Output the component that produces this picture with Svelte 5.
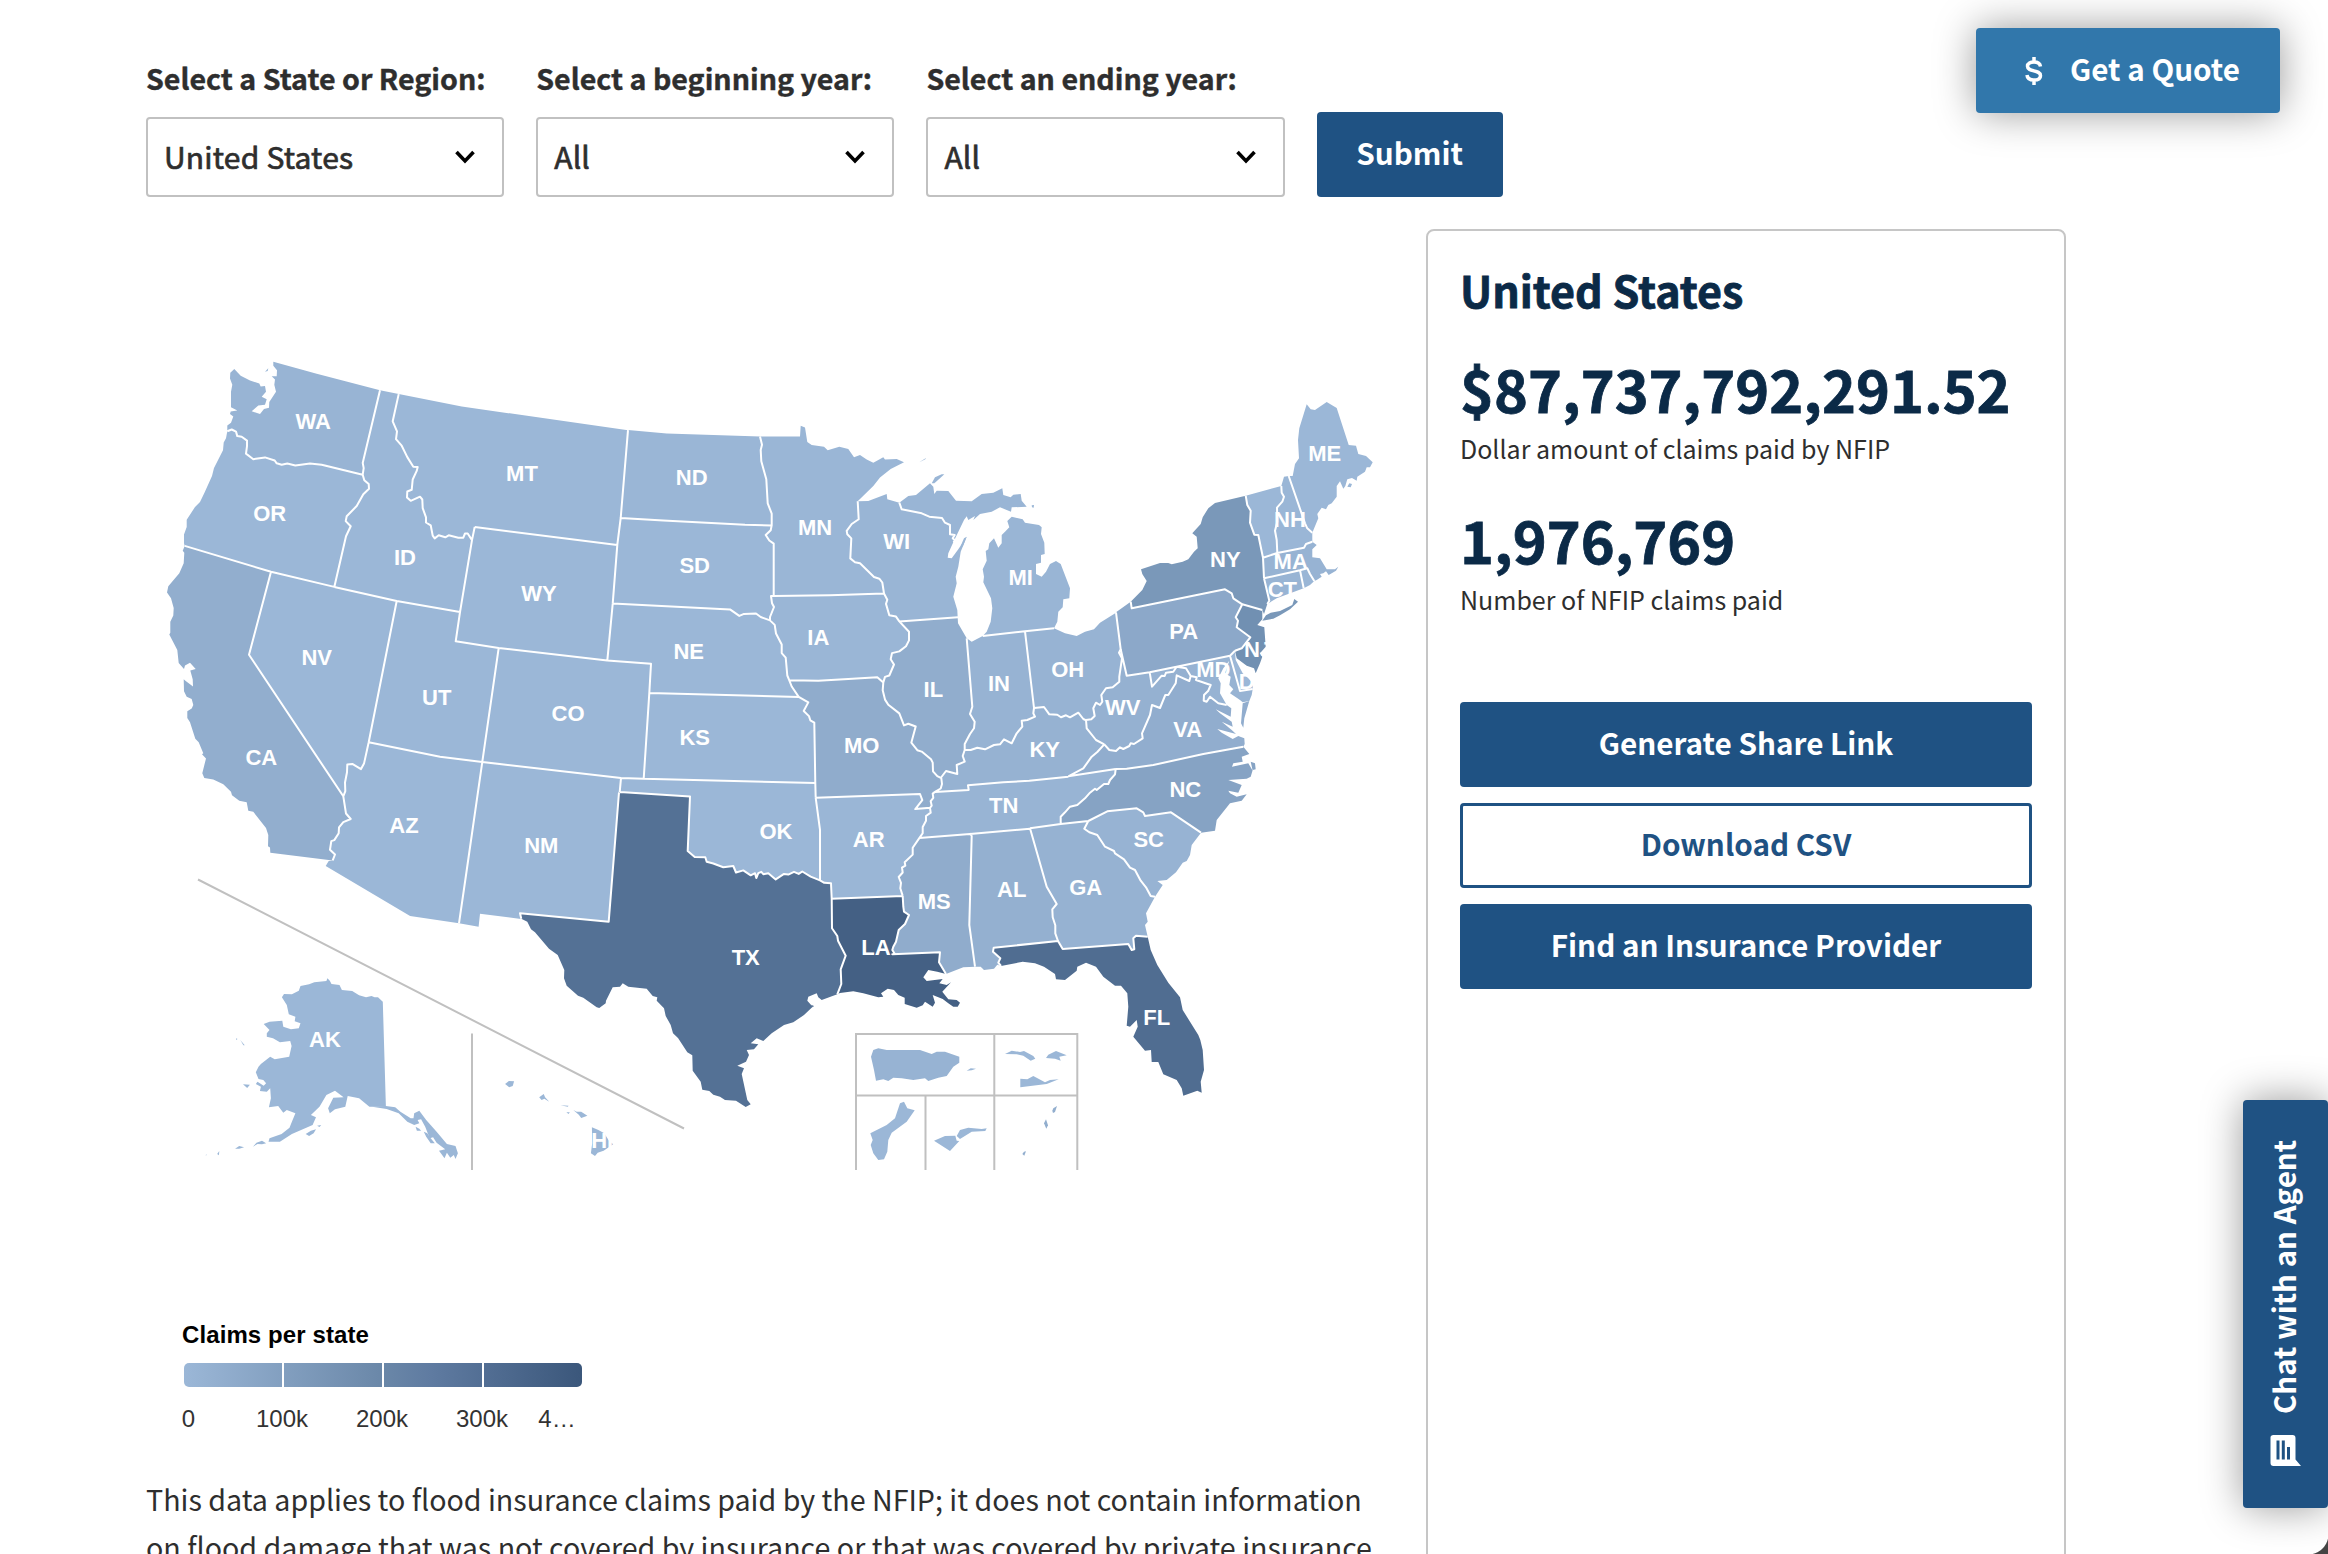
<script>
  // Digitising frames: origin and scale of each sheet the arcs were traced on.
  const frames = {
    A: [150, 340, 3, 2.9037],
    B: [600, 400, 3, 2.9037],
    C: [1060, 380, 3, 3],
    D: [500, 760, 3, 3],
    E: [180, 860, 2.9037, 3],
    F: [820, 780, 3, 3],
    G: [840, 420, 3, 3],
  };

  // Borders shared by two states; each is stored once.
  const borders = {
    waid: 'A 690,146 638,357 641,372 638,391',
    orwa: 'A 638,391 515,362 480,359 436,364 412,359 395,362 380,358 374,350 345,341 310,346 288,330 291,308 291,292 275,281 262,279 258,266 245,260 232,265',
    orid: 'A 638,391 643,407 656,418 657,432 640,448 620,482 590,512 587,526 602,541 588,570 553,717',
    orca: 'A 104,598 363,673',
    ornv: 'A 363,673 553,717',
    idnv: 'A 553,717 740,758',
    idut: 'A 740,758 930,790',
    idwy: 'A 930,790 966,581',
    mtwyw: 'A 966,581 974,543',
    idmt: 'A 746,157 728,236 741,265 738,288 755,307 772,340 790,368 803,369 800,380 788,405 785,435 772,440 771,457 782,467 810,455 817,463 818,488 828,515 828,530 842,538 848,568 854,576 866,567 886,573 896,567 925,574 940,574 945,562 953,562 966,581',
    mtnd: 'A 1434,262 1412,517',
    mtsd: 'A 1412,517 1402,595',
    mtwy: 'A 974,543 1402,595',
    wysd: 'A 1402,595 1388,766',
    wyne: 'A 1388,766 1372,931',
    wyco: 'A 1372,931 1046,894',
    wyut: 'A 1046,894 917,875 930,790',
    nvca: 'A 363,673 297,914 580,1325',
    caaz: 'A 580,1325 588,1375 602,1391 580,1400 567,1415 566,1432 553,1452 544,1455 540,1480 555,1494 548,1511',
    aznv: 'A 656,1168 642,1230 633,1246 607,1231 592,1233 591,1255 585,1285 586,1310 580,1325',
    nvut: 'A 740,758 656,1168',
    utaz: 'A 656,1168 870,1210 997,1225',
    utco: 'A 1046,894 997,1225',
    conm: 'A 997,1225 1413,1272',
    cook: 'A 1413,1272 B 131,1100',
    aznm: 'A 997,1225 946,1568 E 810,190',
    nmok: 'A 1413,1272 1409,1313',
    nmtx: 'D 64,476 60,460 326,485 357,97',
    ndsd: 'B 62,343 190,350 435,362 515,364',
    ndmn: 'B 480,106 486,130 482,145 484,178 499,230 503,300 515,330 515,364',
    sdmn: 'B 515,364 512,378 497,392 508,408 521,417 521,569',
    sdia: 'B 521,569 513,569 516,590 522,601 510,630 510,640',
    sdne: 'B 38,591 390,608 418,627 432,621 468,620 482,630 510,640',
    mnia: 'B 521,569 690,567 852,562',
    mnwi: 'B 773,294 776,346 755,360 740,380 742,390 754,402 751,460 765,471 780,474 822,514 838,519 847,530 852,562',
    wiia: 'B 852,562 862,580 858,592 868,625 888,629 898,643',
    wiil: 'B 898,643 1074,631',
    iail: 'B 898,643 927,673 927,698 918,715 898,730 876,735 872,753 882,768 868,800 855,804 850,820',
    iamo: 'B 850,820 832,805 745,810 655,815 568,814',
    iane: 'B 510,640 524,653 528,678 545,710 545,735 557,748 562,800 568,814',
    nemo: 'B 568,814 575,832 596,862',
    neks: 'B 148,851 596,862',
    neco: 'B 22,756 153,766 148,851',
    coks: 'B 148,851 131,1100',
    ksmo: 'B 596,862 625,878 611,903 627,918 631,930 643,937 646,1112',
    ksok: 'B 131,1100 646,1112',
    mook: 'B 646,1112 647,1155',
    moar: 'B 647,1155 960,1144 967,1162 946,1188 990,1184',
    ilmo: 'B 850,820 848,843 855,870 865,885 898,910 912,945 925,940 947,948 934,995 952,1017 965,1021 993,1043 998,1053 999,1078 1012,1092 1024,1098',
    moky: 'B 1024,1098 1026,1115 1022,1128 1005,1138',
    motn: 'B 1005,1138 998,1143 1000,1155 992,1165 995,1178 990,1184',
    artn: 'B 990,1184 992,1198 978,1208 978,1222 968,1240 968,1258 958,1272',
    tnms: 'B 958,1272 1110,1260',
    tnal: 'B 1110,1260 1290,1245',
    okar: 'B 647,1155 660,1248 660,1395',
    oktx: 'B 60,1138 270,1151 263,1310 284,1327 316,1328 320,1341 340,1346 370,1357 400,1353 408,1372 430,1366 452,1380 465,1374 469,1388 475,1374 484,1370 490,1377 505,1374 527,1392 552,1376 565,1378 582,1370 596,1376 607,1369 632,1384 660,1395',
    txar: 'B 660,1395 673,1402 693,1403 695,1448',
    arla: 'B 695,1448 908,1440',
    arms: 'B 958,1272 938,1300 938,1320 914,1342 916,1352 906,1358 908,1372 896,1385 903,1402 901,1418 908,1440',
    lams: 'F 248,348 250,380 252,395 267,405 255,432 236,450 228,485 220,500 217,510 225,523 217,523 360,517 357,547 378,582',
    txla: 'D 995,415 996,505 1012,528 1014,542 1037,587 1022,628 1024,672 1012,703',
    msal: 'F 465,560 448,435 455,168 450,160',
    alfl: 'F 543,558 535,548 541,535 519,515 521,503 714,483',
    alga: 'F 630,145 680,320 710,372 697,388 698,412 706,436 706,460 714,483',
    gafl: 'F 714,483 728,507 925,492 935,510 943,508 940,475 948,467 983,470',
    gasc: 'F 1005,350 992,348 978,322 962,302 945,270 930,263 912,238 885,220 882,213 855,200 832,165 808,157 793,146 805,123',
    tnga: 'F 630,145 722,132',
    ncga: 'F 722,132 805,123',
    scnc: 'F 805,123 862,94 950,85 970,97 975,108 1053,97 1143,158',
    ncva: 'C 550,1100 430,1122 280,1155 200,1166 167,1167',
    tnva: 'C 167,1167 25,1189',
    kytn: 'G 685,1070 568,1082 490,1087 384,1096 386,1110 285,1116',
    nctn: 'C 167,1167 165,1183 150,1200 145,1212 132,1212 110,1230 105,1226 90,1238 75,1255 52,1275 30,1280 15,1297 F 722,110 722,132',
    vaky: 'C 25,1189 70,1165 95,1130 112,1116 133,1093',
    wvky: 'C 133,1093 108,1080 80,1045 78,1020',
    wvva: 'C 133,1093 148,1110 168,1113 180,1102 190,1107 208,1098 212,1090 222,1092 248,1075 246,1060 270,1005 276,975 300,984 316,945 325,945 347,910 350,886 388,903 392,888',
    wvmd: 'C 392,888 378,865 350,860 340,875 318,878 314,888 305,887 276,920 269,877',
    mdva: 'C 392,888 410,892 408,900 452,915 445,932 432,945 431,962 440,965 450,950 475,970 500,975',
    wvpa: 'C 269,877 200,887 182,808',
    ohwv: 'C 182,808 177,818 186,835 178,890 178,905 158,922 138,925 124,945 127,965 120,975 108,968 100,985 104,1008 94,1018 78,1020',
    ohpa: 'C 168,697 182,808',
    pany: 'C 212,665 215,685 495,628 515,640 520,655 547,673',
    panj: 'C 547,673 527,712 534,722 530,742 571,772 545,805 525,812',
    pamd: 'C 269,877 510,827',
    pade: 'C 510,827 525,812',
    mdde: 'C 510,827 540,933 578,927',
    njny: 'C 547,673 607,690',
    nyct: 'C 622,672 628,662 612,595',
    nyma: 'C 612,595 609,533',
    nyvt: 'C 609,533 595,465 583,464 570,428 572,392 562,375 557,347',
    vtnh: 'C 664,318 665,338 672,350 667,365 651,383 652,425 645,452 650,480 652,519',
    vtma: 'C 609,533 652,519',
    nhma: 'C 652,519 732,503 738,492 757,485',
    nhme: 'C 686,288 735,430 742,445 757,458',
    ctma: 'C 612,595 720,571',
    mari: 'C 720,571 742,565 750,582 763,603',
    ctri: 'C 720,571 731,625',
    ohky: 'G 740,902 730,897 715,878 690,892 678,886 663,892 652,884 628,883 612,861 582,864',
    kyin: 'G 582,864 580,880 585,890 562,900 545,902 547,920 530,940 515,970 492,958 480,973 462,975 435,988 412,983 392,990 374,990',
    kyil: 'G 374,990 368,1008 374,1025 350,1035 352,1062 318,1053 302,1074',
    ilin: 'G 380,655 397,860 390,882 404,905 402,925 390,942 374,972 374,990',
    ohin: 'G 555,634 582,864',
    inmi: 'G 555,634 428,648',
    ohmi: 'G 555,634 642,625',
    wimi: 'G 178,248 185,268 245,280 268,290 306,294 315,308 330,315 330,343 344,345 338,355 346,362 340,367',
  };

  // Coasts and outer frontiers, drawn without a line.
  const coasts = {
    wac: 'A 232,265 232,248 243,240 250,222 240,215 242,208 262,205 243,195 243,150 247,130 240,112 241,95 253,84 272,104 300,118 328,126 332,135 345,134 348,150 335,165 350,172 345,188 325,190 305,207 330,215 342,200 357,197 358,180 378,150 373,130 375,115 365,105 380,105 381,88 370,75 370,63 500,98 690,146',
    orc: 'A 232,265 228,285 221,298 219,320 192,372 186,395 164,442 150,470 135,485 110,522 110,543 102,565 102,590 104,598',
    idn: 'A 690,146 746,157',
    mtn: 'A 746,157 935,193 1434,262',
    cac: 'A 104,598 98,612 103,618 101,648 88,677 55,715 51,733 63,750 71,778 70,800 61,818 61,850 58,855 82,900 86,938 102,955 105,945 120,937 137,955 121,960 128,985 129,1006 107,990 101,985 102,1020 110,1036 125,1042 130,1060 125,1070 112,1078 112,1098 120,1110 136,1158 146,1168 160,1200 156,1203 168,1215 157,1258 163,1272 190,1276 220,1290 243,1312 246,1322 268,1338 290,1342 295,1367 310,1370 348,1417 355,1437 354,1470 360,1474 361,1489 548,1511',
    azm: 'A 548,1511 536,1513 527,1527 E 668,168 810,190',
    nmm: 'E 810,190 867,200 871,161 990,177',
    ndn: 'B 84,87 200,97 480,106',
    mnn: 'B 480,106 600,106 602,75 615,80 622,122 635,131 672,136 683,146 718,136 745,142 762,166 780,160 800,173 820,182 850,166 855,173 890,171 912,181 872,200 840,225 820,250 773,294',
    win: 'G 53,244 85,243 140,222 142,238 178,248',
    wic: 'G 340,367 325,400 323,413 335,415 355,388 380,350 362,395 355,440 347,470 350,490 340,530 352,570 353,593',
    ill: 'G 380,655 354,610 353,593',
    inl: 'G 428,648 395,665 380,655',
    ohl: 'G 642,625 675,640 710,648 735,635 762,628 780,608 828,578',
    mil: 'G 642,625 652,605 655,575 668,562 670,538 688,535 690,505 662,432 648,423 630,432 618,455 605,470 588,462 588,432 603,428 603,405 614,402 613,368 603,342 605,322 597,315 555,308 548,298 515,290 502,303 508,322 495,335 485,345 485,370 475,383 462,355 448,370 445,388 437,393 440,422 428,448 432,470 430,487 453,535 457,565 452,605 440,635 428,648',
    miu: 'G 178,248 205,228 228,225 270,190 280,200 283,222 290,212 325,213 348,242 395,244 425,222 460,218 487,205 490,225 512,232 520,224 542,222 545,242 560,260 515,262 513,275 480,262 455,275 420,282 400,300 405,288 385,300 380,289 372,300 340,367',
    lac: 'D 1012,703 F 60,639 100,634 130,640 175,652 190,650 183,640 203,626 222,630 235,645 254,653 254,672 290,683 308,676 315,665 338,680 345,668 338,645 368,657 385,670 400,680 413,680 420,668 410,660 385,658 367,635 393,607 380,615 358,610 368,597 320,603 310,592 325,570 352,575 378,582',
    msc: 'F 378,582 430,562 465,560',
    alc: 'F 465,560 482,560 492,570 522,566 532,554 543,558',
    gac: 'F 983,470 975,435 983,425 978,400 1005,350',
    scc: 'F 1143,158 1115,195 1110,225 1100,243 1088,248 1068,277 1040,300 1012,303 1028,315 1005,350',
    ncc: 'F 1143,158 1185,152 C 470,1320 510,1270 545,1262 560,1243 530,1250 510,1240 505,1232 535,1238 545,1215 505,1200 560,1196 572,1190 578,1170 587,1168 585,1150 572,1145 578,1172 565,1150 516,1160 520,1150 548,1145 545,1130 568,1122 550,1100',
    pac: 'C 168,697 212,665',
    dec: 'C 525,812 527,840 548,880 565,895 578,910 578,927',
    njc: 'C 525,812 530,835 560,857 582,865 587,880 600,850 607,830 600,820 617,800 613,742 592,735 607,718 607,690',
    nyc: 'C 607,690 612,702 622,672',
    nyn: 'C 557,347 465,369 445,385 428,412 422,432 397,460 410,470 413,505 402,515 385,538 368,545 335,553 325,549 300,549 243,568 247,582 260,603 247,630 212,665',
    vtn: 'C 557,347 664,318',
    nhn: 'C 664,318 672,290 686,288',
    nhc: 'C 757,458 757,485',
    mec: 'C 686,288 698,288 705,252 717,235 714,180 718,145 740,73 752,88 765,90 800,66 830,84 866,195 888,197 895,222 918,228 938,247 930,262 920,262 915,275 892,290 890,302 876,294 862,298 856,318 850,326 840,304 830,318 830,350 815,370 805,375 798,388 785,383 772,402 775,415 757,458',
    mac: 'C 757,485 770,495 757,508 757,532 780,535 800,568 825,568 835,560 828,572 806,585 798,574 790,580 780,582 785,590 770,600 763,603',
    ric: 'C 763,603 750,615 731,625',
    ctc: 'C 731,625 650,655 622,672',
    mdc: 'C 578,927 575,945 568,963',
    mdb: 'C 568,963 548,967 540,960 510,940 520,928 508,915 512,890 495,880 508,842 490,865 475,895 482,910 480,940 500,975',
    vac: 'C 500,975 514,985 512,1010 467,988 480,1000 515,1025 518,1040 485,1025 515,1050 528,1062 472,1047 485,1058 518,1077 535,1068 553,1075 554,1092 550,1100',
    txc: 'D 1012,703 965,720 955,712 950,700 925,710 922,722 938,740 912,765 880,787 852,795 815,820 790,843 770,835 752,850 775,853 762,868 740,870 747,885 738,905 712,917 732,925 725,942 742,1020 752,1033 737,1041 708,1022 675,1020 660,1010 640,1004 628,993 607,989 602,965 578,932 577,886 562,877 534,834 519,820 512,795 497,768 492,745 470,722 472,712 458,708 440,686 385,680 368,670 360,680 338,682 318,722 317,730 298,744 290,742 250,713 234,707 200,677 192,655 193,630 173,585 147,566 105,517 93,508 82,485 64,476',
    flc: 'F 983,470 992,510 1012,555 1045,608 1080,652 1088,690 1135,765 1141,780 1148,810 1152,870 1142,905 1145,938 1132,932 1090,947 1085,925 1070,900 1030,883 1015,846 995,846 993,810 975,812 940,770 953,740 950,720 930,740 920,737 925,680 922,640 903,617 885,617 850,590 828,560 798,548 772,560 770,572 735,600 708,598 705,582 672,560 645,550 608,545 543,558',
  };

  const points = (text) => {
    let f = frames.A;
    const out = [];
    for (const t of text.split(' ')) {
      if (frames[t]) { f = frames[t]; continue; }
      const [x, y] = t.split(',').map(Number);
      out.push([+(f[0] + x / f[2]).toFixed(1), +(f[1] + y / f[3]).toFixed(1)]);
    }
    return out;
  };
  const line = (pts) => 'M' + pts.map((p) => p.join(' ')).join('L');
  const arcs = Object.fromEntries(Object.entries({ ...borders, ...coasts }).map(([k, v]) => [k, points(v)]));

  // Chains arcs into a ring, turning each one round when its far end is the nearer.
  const dist = (a, b) => Math.hypot(a[0] - b[0], a[1] - b[1]);
  function ring(names) {
    const parts = names.split(' ').map((n) => arcs[n]);
    let out = [...parts[0]];
    if (parts.length > 1) {
      const ends = [parts[1][0], parts[1].at(-1)];
      const near = (p) => Math.min(dist(p, ends[0]), dist(p, ends[1]));
      if (near(out[0]) < near(out.at(-1))) out.reverse();
    }
    for (const part of parts.slice(1)) {
      const tip = out.at(-1);
      out = out.concat(dist(tip, part[0]) <= dist(tip, part.at(-1)) ? part : [...part].reverse());
    }
    return line(out) + 'Z';
  }

  const base = '#9bb7d7', soft = '#9ab6d6', mid = '#97b3d3', deep = '#92aece';
  const states = [
    ['#98b4d4', 'wac waid orwa'],
    [base, 'orwa orid ornv orca orc'],
    [base, 'waid orid idnv idut idwy idmt idn'],
    [base, 'idmt mtwyw mtwy mtsd mtnd mtn'],
    [base, 'mtwyw mtwy wysd wyne wyco wyut idwy'],
    [deep, 'orca nvca caaz cac'],
    [base, 'ornv idnv nvut aznv nvca'],
    [base, 'idut wyut utco utaz nvut'],
    [base, 'wyco utco conm cook coks neco'],
    [base, 'aznv utaz aznm azm caaz'],
    [base, 'conm nmok nmtx nmm aznm'],
    [soft, 'ndn ndmn ndsd mtnd'],
    [base, 'ndsd sdmn sdia sdne wysd mtsd'],
    [base, 'sdne iane nemo neks neco wyne'],
    [base, 'neks ksmo ksok coks'],
    [base, 'cook ksok mook okar oktx nmok'],
    [soft, 'mnn mnwi mnia sdmn ndmn'],
    [soft, 'mnia wiia iail iamo iane sdia'],
    ['#90accc', 'iamo ilmo moky motn moar mook ksmo nemo'],
    [soft, 'moar artn arms arla txar okar'],
    ['#99b5d5', 'mnwi win wimi wic wiil wiia'],
    ['#91adcd', 'wiil ill ilin kyil ilmo iail'],
    [mid, 'ilin inl inmi ohin kyin'],
    [mid, 'ohmi ohl ohpa ohwv ohky ohin'],
    ['#99b5d5', 'mil inmi ohmi'],
    ['#99b5d5', 'miu wimi'],
    ['#96b2d2', 'kyin ohky wvky vaky kytn moky kyil'],
    ['#98b4d4', 'kytn tnva nctn tnga tnal tnms artn motn'],
    ['#90accc', 'tnms msal msc lams arms'],
    ['#94b0d0', 'tnal alga alfl alc msal'],
    ['#96b2d2', 'tnga ncga gasc gac gafl alga'],
    ['#97b3d3', 'scnc scc gasc'],
    ['#86a3c4', 'ncva ncc scnc ncga nctn'],
    ['#91adce', 'tnva ncva vac mdva wvva vaky'],
    ['#95b1d1', 'wvmd wvpa ohwv wvky wvva'],
    [mid, 'pamd mdde mdc mdb mdva wvmd'],
    [base, 'pade dec mdde'],
    ['#8ca8c9', 'pac pany panj pade pamd wvpa ohpa'],
    ['#7190b2', 'njny njc panj'],
    ['#7a98b9', 'nyn pany njny nyc nyct nyma nyvt'],
    [base, 'vtn vtnh vtma nyvt'],
    [soft, 'nhn nhme nhc nhma vtnh'],
    [base, 'mec nhme'],
    [mid, 'vtma nhma mac mari ctma nyma'],
    [soft, 'mari ric ctri'],
    ['#98b4d4', 'ctma ctri ctc nyct'],
    ['#547195', 'nmtx oktx txar txla txc'],
    ['#446084', 'arla lams lac txla'],
    ['#506d91', 'gafl flc alfl'],
  ].map(([fill, names]) => ({ fill, d: ring(names) }));

  // Islands, Alaska, Hawaii and the territories.
  const islands = [
    ['#7a98b9', 'C 607,722 618,706 632,698 660,693 697,675 703,657 714,665 690,688 660,706 640,716'],
    ['#91adce', 'C 568,963 548,970 543,1030 550,1043 553,1015'],
    [soft, 'G 275,190 285,172 305,163 313,163 300,175 283,190'],
    [soft, 'G 238,127 258,114 256,118'],
    [soft, 'G 575,256 582,255 581,263 576,262'],
    [soft, 'G 362,378 372,355 380,350 368,380'],
    [base, 'A 345,92 355,82 353,90'],
    [base, 'C 862,320 868,310 876,312 872,322'],
    ['#547195', 'D 933,734 942,738 938,742'],
    [base, 'E 589,425 575,412 565,412 556,408 540,412 520,406 500,393 470,390 463,375 440,372 435,362 428,355 425,363 390,367 375,373 350,378 345,392 325,403 302,402 296,412 310,435 316,463 335,470 333,484 350,490 345,505 322,508 300,500 297,482 260,485 243,492 260,510 252,520 252,530 270,535 290,547 320,543 324,558 317,590 275,598 262,590 235,612 228,620 220,637 228,657 242,660 250,670 243,677 225,665 220,672 235,680 232,693 252,695 262,685 264,715 258,742 285,738 300,758 310,750 335,760 325,785 318,803 295,822 260,835 257,845 290,845 325,822 385,795 395,772 380,765 405,740 425,705 450,692 475,712 445,713 430,745 435,760 450,748 480,740 487,708 520,715 550,740 598,740'],
    [base, 'E 558,740 598,738 625,742 640,755 670,775 678,775 680,760 695,752 715,780 745,815 775,852 800,858 807,880 800,897 795,885 785,893 775,878 768,895 752,872 770,868 745,848 735,832 725,835 712,800 700,778 690,780 695,790 680,795 660,785 635,760 600,747'],
    [base, 'E 708,815 718,820 728,835 740,850 728,850 715,830'],
    [base, 'E 684,800 695,806 700,812 688,812'],
    [base, 'E 365,822 380,812 395,808 388,820 375,828'],
    [base, 'E 398,797 410,795 405,801'],
    [base, 'E 212,860 222,848 238,842 250,850 238,853 225,852'],
    [base, 'E 160,866 172,858 186,862 172,866'],
    [base, 'E 108,882 114,873 113,886'],
    [base, 'E 74,886 77,883 77,886'],
    [base, 'E 183,673 203,674 195,684'],
    [base, 'E 175,540 188,556 184,556'],
    [base, 'E 163,535 167,537 163,540'],
    [base, 'E 944,672 955,663 970,664 966,678 956,682'],
    [base, 'E 1043,712 1056,702 1060,712 1072,725 1058,716 1050,720'],
    [base, 'E 1105,736 1128,737 1126,740'],
    [base, 'E 1122,757 1132,757 1128,762'],
    [base, 'E 1142,750 1152,755 1165,755 1183,767 1165,774 1158,764'],
    [base, 'E 1196,802 1215,810 1232,820 1246,843 1258,853 1230,872 1213,878 1205,888 1193,880 1197,850'],
    [mid, 'F 160,810 175,805 200,810 300,810 335,822 350,815 375,815 418,830 418,848 400,860 380,888 355,893 325,903 315,895 280,900 245,895 220,893 205,903 190,898 168,902 162,870 153,830'],
    [base, 'F 440,872 452,865 468,866 455,871'],
    [base, 'F 555,822 575,812 600,816 612,813 640,828 646,836 632,842 610,827 590,823'],
    [base, 'F 678,834 685,824 708,813 740,826 718,830 722,842 705,836'],
    [base, 'F 601,922 601,896 622,898 640,888 675,907 690,900 716,898 680,912'],
    [base, 'F 151,1060 200,1035 225,1015 240,970 252,965 262,985 284,991 260,1025 215,1058 205,1080 202,1115 192,1138 175,1140 160,1120 152,1095 158,1080'],
    [base, 'F 342,1082 375,1068 406,1067 410,1082 418,1083 390,1113'],
    [base, 'F 410,1068 420,1050 445,1043 485,1047 500,1045 496,1053 455,1055 420,1077'],
    [deep, 'F 697,992 700,985 711,978 705,996 699,999'],
    [deep, 'F 672,1030 678,1018 684,1036 679,1046'],
    [deep, 'F 607,1122 612,1115 618,1114 613,1127'],
  ].map(([fill, d]) => ({ fill, d: line(points(d)) + 'Z' }));

  const mesh = Object.keys(borders).map((k) => line(arcs[k])).join('');

  const labels = Object.entries({
    WA: 'A 490,238', OR: 'A 359,504', ID: 'A 765,632', MT: 'A 1116,388', WY: 'A 1167,736', NV: 'A 500,922',
    UT: 'A 860,1038', CO: 'A 1254,1085', CA: 'A 334,1213', AZ: 'A 762,1411', NM: 'A 1174,1469',
    ND: 'B 275,226', SD: 'B 284,482', NE: 'B 266,731', KS: 'B 284,980', MN: 'B 645,371', IA: 'B 655,690',
    WI: 'B 890,411', MI: 'B 1262,516', IL: 'B 1000,841', IN: 'B 1197,824', MO: 'B 785,1003', OK: 'B 528,1254',
    AR: 'B 806,1277', TN: 'B 1211,1178', MS: 'B 1003,1457', AL: 'B 1235,1422', OH: 'G 683,749', KY: 'G 614,988',
    WV: 'C 188,983', VA: 'C 383,1049', NC: 'C 376,1228', PA: 'C 371,755', NY: 'C 496,538', ME: 'C 794,220',
    NH: 'C 690,419', MA: 'C 692,545', CT: 'C 667,628', NJ: 'C 594,808', MD: 'C 460,869', DE: 'C 582,905',
    SC: 'F 986,179', GA: 'F 797,323', FL: 'F 1010,713', LA: 'F 168,503', TX: 'D 737,592', AK: 'E 421,539',
    HI: 'E 1226,842',
  }).map(([name, at]) => ({ name, x: points(at)[0][0], y: points(at)[0][1] + 7.2 }));

  const ticks = [[188.5, '0'], [282, '100k'], [382, '200k'], [482, '300k'], [557, '4…']];

  const filters = [
    { id: 'region', label: 'Select a State or Region:', value: 'United States' },
    { id: 'from', label: 'Select a beginning year:', value: 'All' },
    { id: 'to', label: 'Select an ending year:', value: 'All' },
  ];
</script>

<div class="page">
  <form class="filters">
    {#each filters as f (f.id)}
      <div class="field">
        <span class="label">{f.label}</span>
        <button type="button" class="select">
          <span class="value">{f.value}</span>
          <svg width="22" height="16" viewBox="0 0 22 16"><path d="M2.5 3 11 12 19.5 3" /></svg>
        </button>
      </div>
    {/each}
    <button type="button" class="btn submit">Submit</button>
  </form>

  <div class="content">
    <div class="left">
      <svg class="map" width="1250" height="1120" viewBox="146 340 1250 1120">
        <defs>
          <linearGradient id="ramp">
            <stop offset="0" stop-color="#9bb7d7" />
            <stop offset=".5" stop-color="#6a87a8" />
            <stop offset=".62" stop-color="#5f7ba1" />
            <stop offset="1" stop-color="#3b577b" />
          </linearGradient>
        </defs>
        {#each states as s}<path d={s.d} fill={s.fill} />{/each}
        <path class="mesh" d={mesh} />
        {#each islands as s}<path d={s.d} fill={s.fill} />{/each}
        <g class="insets">
          <path d="M198 879.5 684 1128.5M472 1033.5V1170" />
          <path d="M856 1170V1034H1077.300V1170M856 1095.500H1077.300M925.500 1095.500V1170M994.300 1034V1170" />
        </g>
        <g class="names">
          {#each labels as l}<text x={l.x} y={l.y}>{l.name}</text>{/each}
        </g>
        <text class="legend-title" x="182" y="1343">Claims per state</text>
        <rect x="184" y="1363" width="398" height="24" rx="5" fill="url(#ramp)" />
        <path class="mesh" d="M283 1363V1387M383 1363V1387M483 1363V1387" />
        <g class="ticks">
          {#each ticks as [x, t]}<text {x} y="1427">{t}</text>{/each}
        </g>
      </svg>
      <p class="note">
        This data applies to flood insurance claims paid by the NFIP; it does not contain information<br />
        on flood damage that was not covered by insurance or that was covered by private insurance
      </p>
    </div>

    <aside class="panel">
      <h2>United States</h2>
      <div class="figure money">$87,737,792,291.52</div>
      <div class="caption">Dollar amount of claims paid by NFIP</div>
      <div class="figure count">1,976,769</div>
      <div class="caption">Number of NFIP claims paid</div>
      <div class="actions">
        <button type="button" class="btn">Generate Share Link</button>
        <button type="button" class="btn outline">Download CSV</button>
        <button type="button" class="btn">Find an Insurance Provider</button>
      </div>
    </aside>
  </div>

  <button type="button" class="quote">
    <svg width="18" height="30" viewBox="0 0 18 30">
      <path d="M9 1v5M9 24v5M15.500 10.500C15 7.500 12.500 6 9 6S2.500 7.500 2.500 10.300c0 6.200 13 3 13 9.400C15.500 22.500 12.800 24 9 24s-6.700-1.600-7-5" />
    </svg>
    <span>Get a Quote</span>
  </button>

  <button type="button" class="chat">
    <span class="chat-inner">
      <svg width="32" height="32" viewBox="0 0 32 32">
        <path fill="#fff" d="M0 31V3.500Q0 .5 3 .5h25.500q2.500 0 2.500 3V22.500q0 3-3 3H6.500z" />
        <path stroke="#1f5283" stroke-width="3" d="M6.500 8h19M6.500 13.300h19M6.500 18.500h12.500" />
      </svg>
      <span class="chat-text">Chat with an Agent</span>
    </span>
  </button>
  <div class="corner"></div>
</div>

<style>
  :global(body) { background: #fff; }
  .page {
    position: relative;
    box-sizing: border-box;
    width: 2328px;
    height: 1554px;
    overflow: hidden;
    padding: 56px 0 0 146px;
    font-family: 'Noto Sans CJK SC', 'Noto Sans', sans-serif;
    color: #2e2e2e;
  }
  button { font: inherit; border: 0; margin: 0; padding: 0; }
  .filters { display: flex; gap: 32px; height: 141px; align-items: flex-end; }
  .field { width: 358.200px; display: flex; flex-direction: column; gap: 15px; }
  .label {
    font-weight: 700;
    font-size: 28.600px;
    line-height: 48px;
    white-space: nowrap;
    -webkit-text-stroke: 0.4px currentColor;
  }
  .select {
    display: flex;
    align-items: center;
    justify-content: space-between;
    height: 80px;
    box-sizing: border-box;
    padding: 0 26px 0 16px;
    border: 2px solid #c1c1c1;
    border-radius: 4px;
    background: #fff;
    color: #2e2e2e;
    font-size: 30px;
    letter-spacing: 0.200px;
    -webkit-text-stroke: 0.7px currentColor;
  }
  .value { padding-bottom: 3px; }
  .select path { fill: none; stroke: #000; stroke-width: 3.600; }
  .btn {
    height: 85px;
    padding-bottom: 5px;
    border-radius: 4px;
    background: #1f5283;
    color: #fff;
    font-size: 29.700px;
    font-weight: 700;
  }
  .submit { width: 186px; }
  .content { display: flex; align-items: flex-start; margin-top: 32px; }
  .left { width: 1280px; flex: none; padding-top: 111px; }
  .map { display: block; }
  .mesh { fill: none; stroke: #fff; stroke-width: 2; stroke-linejoin: round; }
  .insets path { fill: none; stroke: #c0c0c0; stroke-width: 2; }
  .names text {
    font: 700 22px 'Liberation Sans', sans-serif;
    fill: #fff;
    text-anchor: middle;
  }
  .legend-title { font: 700 24px 'Liberation Sans', sans-serif; fill: #000; letter-spacing: 0.100px; }
  .ticks text { font: 24px 'Liberation Sans', sans-serif; fill: #333; text-anchor: middle; }
  .note { margin: 15px 0 0; font-size: 28.640px; line-height: 48px; white-space: nowrap; }
  .panel {
    box-sizing: border-box;
    width: 640px;
    height: 1400px;
    border: 2px solid #c6c6c6;
    border-radius: 8px;
    padding: 28px 32px 0;
  }
  h2, .figure { -webkit-text-stroke: 0.8px currentColor; }
  h2 { margin: 0; font-size: 43px; line-height: 60px; color: #0b2a47; white-space: nowrap; }
  .figure { font-weight: 700; font-size: 57.600px; line-height: 72px; color: #0b2a47; white-space: nowrap; }
  .money { margin-top: 33px; }
  .count { margin-top: 34px; }
  .caption { margin-top: 4px; font-size: 25px; line-height: 41px; white-space: nowrap; }
  .actions { display: grid; gap: 16px; margin-top: 82px; }
  .outline { background: #fff; color: #1f5283; border: 3px solid #1f5283; }
  .quote {
    position: absolute;
    left: 1976px;
    top: 28px;
    width: 304px;
    height: 85px;
    display: flex;
    align-items: center;
    padding-left: 49px;
    gap: 27px;
    border-radius: 4px;
    background: #3177ab;
    color: #fff;
    font-size: 29.600px;
    font-weight: 700;
    box-shadow: 0 0 40px rgba(0, 0, 0, 0.4);
    white-space: nowrap;
  }
  .quote span { padding-bottom: 4px; }
  .quote path { fill: none; stroke: #fff; stroke-width: 3.500; }
  .chat {
    position: absolute;
    left: 2243px;
    top: 1100px;
    width: 85px;
    height: 408px;
    border-radius: 4px;
    background: #1f5283;
    color: #fff;
    font-size: 29.500px;
    font-weight: 700;
    box-shadow: 0 0 40px rgba(0, 0, 0, 0.4);
  }
  .chat-inner {
    position: absolute;
    left: 0;
    top: 408px;
    width: 408px;
    height: 85px;
    box-sizing: border-box;
    padding-left: 42px;
    display: flex;
    align-items: center;
    gap: 20px;
    transform: rotate(-90deg);
    transform-origin: 0 0;
    white-space: nowrap;
  }
  .chat-text { padding-bottom: 6px; }
  .corner {
    position: absolute;
    right: 0;
    bottom: 0;
    width: 20px;
    height: 20px;
    background: radial-gradient(circle at 0 0, transparent 20px, #444 21px);
  }
</style>
